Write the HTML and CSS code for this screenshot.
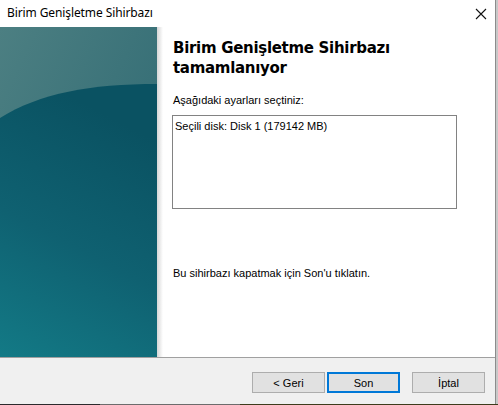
FILE: index.html
```html
<!DOCTYPE html>
<html lang="tr">
<head>
<meta charset="utf-8">
<link rel="stylesheet" href="styles.css">
</head>
<body>
<div class="window">
  <div class="titlebar">
    <span class="title">Birim Genişletme Sihirbazı</span>
    <svg class="close" width="12" height="12" viewBox="0 0 12 12"><path d="M1 1L11 11M11 1L1 11" stroke="#111" stroke-width="1.1"/></svg>
  </div>
  <div class="main">
    <div class="banner">
      <svg width="157" height="330" viewBox="0 0 157 330" preserveAspectRatio="none">
        <defs>
          <linearGradient id="top" x1="0" y1="0" x2="1" y2="1">
            <stop offset="0" stop-color="#4c7f82"/>
            <stop offset="1" stop-color="#2a6670"/>
          </linearGradient>
          <linearGradient id="low" x1="0.3" y1="0" x2="0" y2="1">
            <stop offset="0" stop-color="#0a5262"/>
            <stop offset="0.5" stop-color="#0f6171"/>
            <stop offset="1" stop-color="#137a86"/>
          </linearGradient>
        </defs>
        <rect width="157" height="330" fill="url(#top)"/>
        <path d="M0 91 C40 66 90 57 157 57 L157 330 L0 330 Z" fill="url(#low)"/>
      </svg>
    </div>
    <div class="shade"></div>
    <div class="content">
      <h1 class="heading">Birim Genişletme Sihirbazı tamamlanıyor</h1>
      <p class="label">Aşağıdaki ayarları seçtiniz:</p>
      <div class="listbox">Seçili disk: Disk 1 (179142 MB)</div>
      <p class="finish">Bu sihirbazı kapatmak için Son'u tıklatın.</p>
    </div>
  </div>
  <div class="footer">
    <button class="btn">&lt; Geri</button>
    <button class="btn btn-default">Son</button>
    <button class="btn btn-cancel">İptal</button>
  </div>
</div>
</body>
</html>
```
FILE: styles.css
```css
html, body {
  margin: 0;
  padding: 0;
}
body {
  width: 498px;
  height: 405px;
  background: linear-gradient(to right, #2b2a2c 0, #2b2a2c 100px, #6c6c6c 100px, #6c6c6c 240px, #3d3b1c 240px);
  overflow: hidden;
  font-family: "Liberation Sans", Arial, sans-serif;
}
.window {
  width: 495px;
  height: 404px;
  background: #f0f0f0;
  border-right: 1px solid #8c8c8c;
  display: flex;
  flex-direction: column;
  box-sizing: content-box;
  position: relative;
}
.window::after {
  content: "";
  position: absolute;
  top: 0;
  right: -3px;
  width: 2px;
  height: 404px;
  background: #c8c8c8;
}
.titlebar {
  height: 27px;
  background: #ffffff;
  display: flex;
  align-items: center;
  justify-content: space-between;
  padding: 0 8px 2px 7px;
  box-sizing: border-box;
}
.title {
  font-family: "Noto Sans", "Open Sans", sans-serif;
  font-size: 12px;
  color: #000;
  letter-spacing: -0.1px;
}
.close {
  display: block;
  margin-top: 2px;
}
.main {
  height: 330px;
  display: flex;
  background: #ffffff;
}
.banner {
  width: 157px;
  height: 330px;
}
.banner svg {
  display: block;
}
.shade {
  width: 6px;
  background: linear-gradient(to right, #d6d6d6, #ffffff);
}
.content {
  flex: 1;
  padding: 11px 0 0 10px;
  font-size: 11px;
  color: #000;
}
.heading {
  font-family: "DejaVu Sans", Verdana, sans-serif;
  font-weight: bold;
  font-size: 15px;
  line-height: 20px;
  margin: 0;
  width: 250px;
  letter-spacing: -0.3px;
}
.label {
  margin: 16px 0 0 0;
  line-height: 13px;
}
.listbox {
  margin-top: 8px;
  width: 285px;
  height: 94px;
  border: 1px solid #828282;
  padding: 4px 0 0 2px;
  box-sizing: border-box;
  line-height: 13px;
  margin-left: -1px;
}
.finish {
  margin: 58px 0 0 0;
  line-height: 13px;
}
.footer {
  border-top: 1px solid #a0a0a0;
  flex: 1;
  display: flex;
  align-items: flex-start;
  padding: 14px 0 0 252px;
  box-sizing: border-box;
}
.btn {
  width: 73px;
  height: 21px;
  background: #e1e1e1;
  border: 1px solid #adadad;
  font-family: "Liberation Sans", Arial, sans-serif;
  font-size: 11px;
  color: #000;
  padding: 0;
  margin: 0;
  box-sizing: border-box;
}
.btn-default {
  border: 2px solid #0078d7;
  margin-left: 2px;
}
.btn-cancel {
  margin-left: 12px;
}
```
